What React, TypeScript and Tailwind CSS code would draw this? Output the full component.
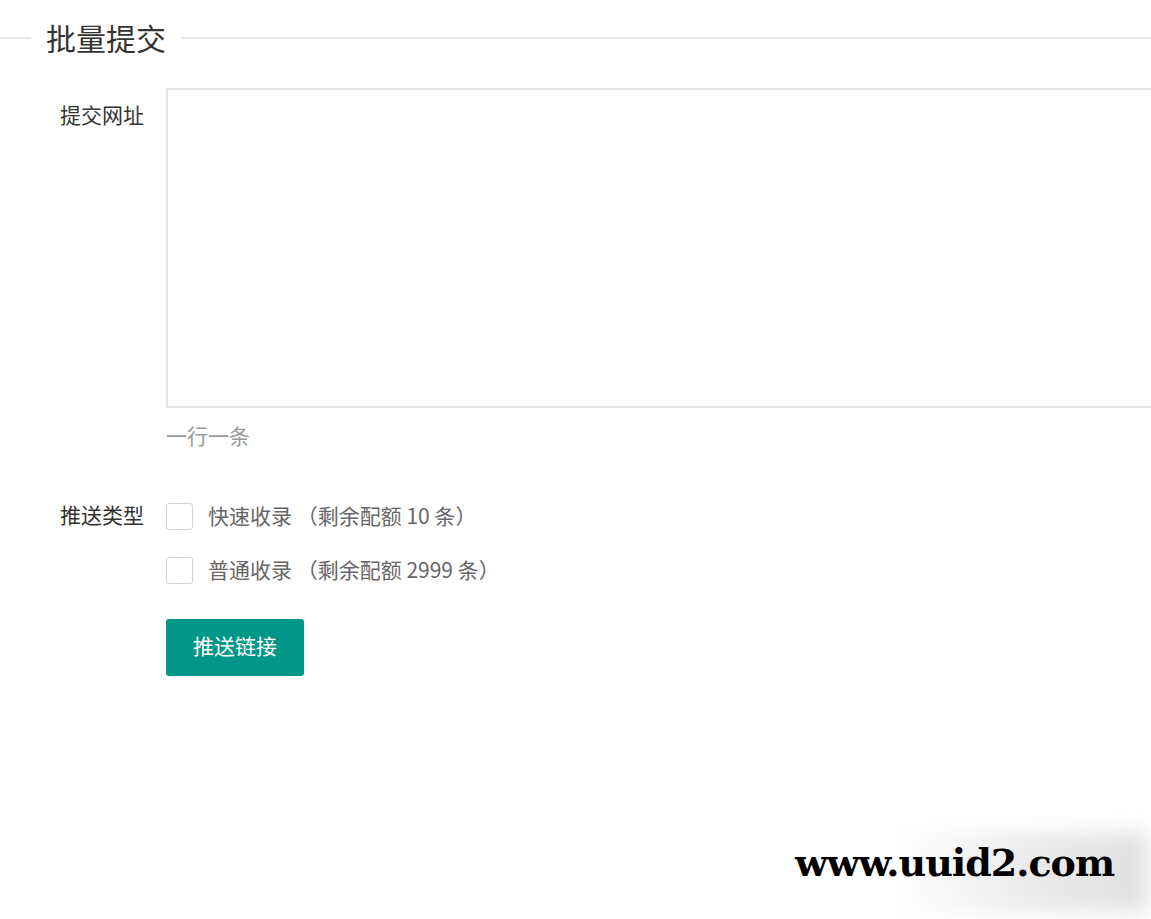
import React from 'react';

const font = { fontFamily: '"Noto Sans CJK SC", "Noto Sans", sans-serif' };

const Check = ({ label }: { label: string }) => (
    <div className="flex h-[30px] items-center">
        <span className="h-[27px] w-[27px] shrink-0 rounded-[3px] border border-[#d2d2d2] bg-white" />
        <span className="-mt-[3px] ml-[15px] text-[21px] leading-[30px] text-[#666]">{label}</span>
    </div>
);

export default function App() {
    return (
        <div className="relative h-[919px] w-full overflow-hidden bg-white" style={font}>
            <div className="flex h-[30px] items-center mt-[23px]">
                <div className="h-[2px] w-[31px] bg-[#e6e6e6]" />
                <div className="-mt-[2px] px-[15px] text-[30px] leading-[30px] text-[#333]">批量提交</div>
                <div className="h-[2px] flex-1 bg-[#e6e6e6]" />
            </div>

            <div className="mt-[35px] flex">
                <label className="w-[166px] shrink-0 pr-[22px] pt-[11px] text-right text-[21px] leading-[30px] text-[#333]">提交网址</label>
                <textarea className="h-[320px] w-[1000px] shrink-0 resize-none border-2 border-[#e6e6e6] outline-none" />
            </div>
            <div className="mt-[12px] pl-[166px] text-[21px] leading-[30px] text-[#999]">一行一条</div>

            <div className="mt-[51px] flex">
                <label className="-mt-[2px] w-[166px] shrink-0 pr-[22px] text-right text-[21px] leading-[30px] text-[#333]">推送类型</label>
                <div className="flex flex-col gap-[24px]">
                    <Check label="快速收录 （剩余配额 10 条）" />
                    <Check label="普通收录 （剩余配额 2999 条）" />
                </div>
            </div>

            <div className="mt-[34px] pl-[166px]">
                <button className="h-[57px] rounded-[3px] bg-[#009688] px-[27px] pb-[3px] text-[21px] text-white">推送链接</button>
            </div>

            <div className="absolute left-[895px] top-[832px] h-[80px] w-[252px] bg-gradient-to-r from-white via-[#ececec] to-[#e0e0e0] blur-[10px]" />
            <div
                className="absolute left-[795px] top-[840px] text-[38px] font-bold leading-[46px] tracking-[-1px] text-black"
                style={{ fontFamily: '"DejaVu Serif", serif' }}
            >
                www.uuid2.com
            </div>
        </div>
    );
}
